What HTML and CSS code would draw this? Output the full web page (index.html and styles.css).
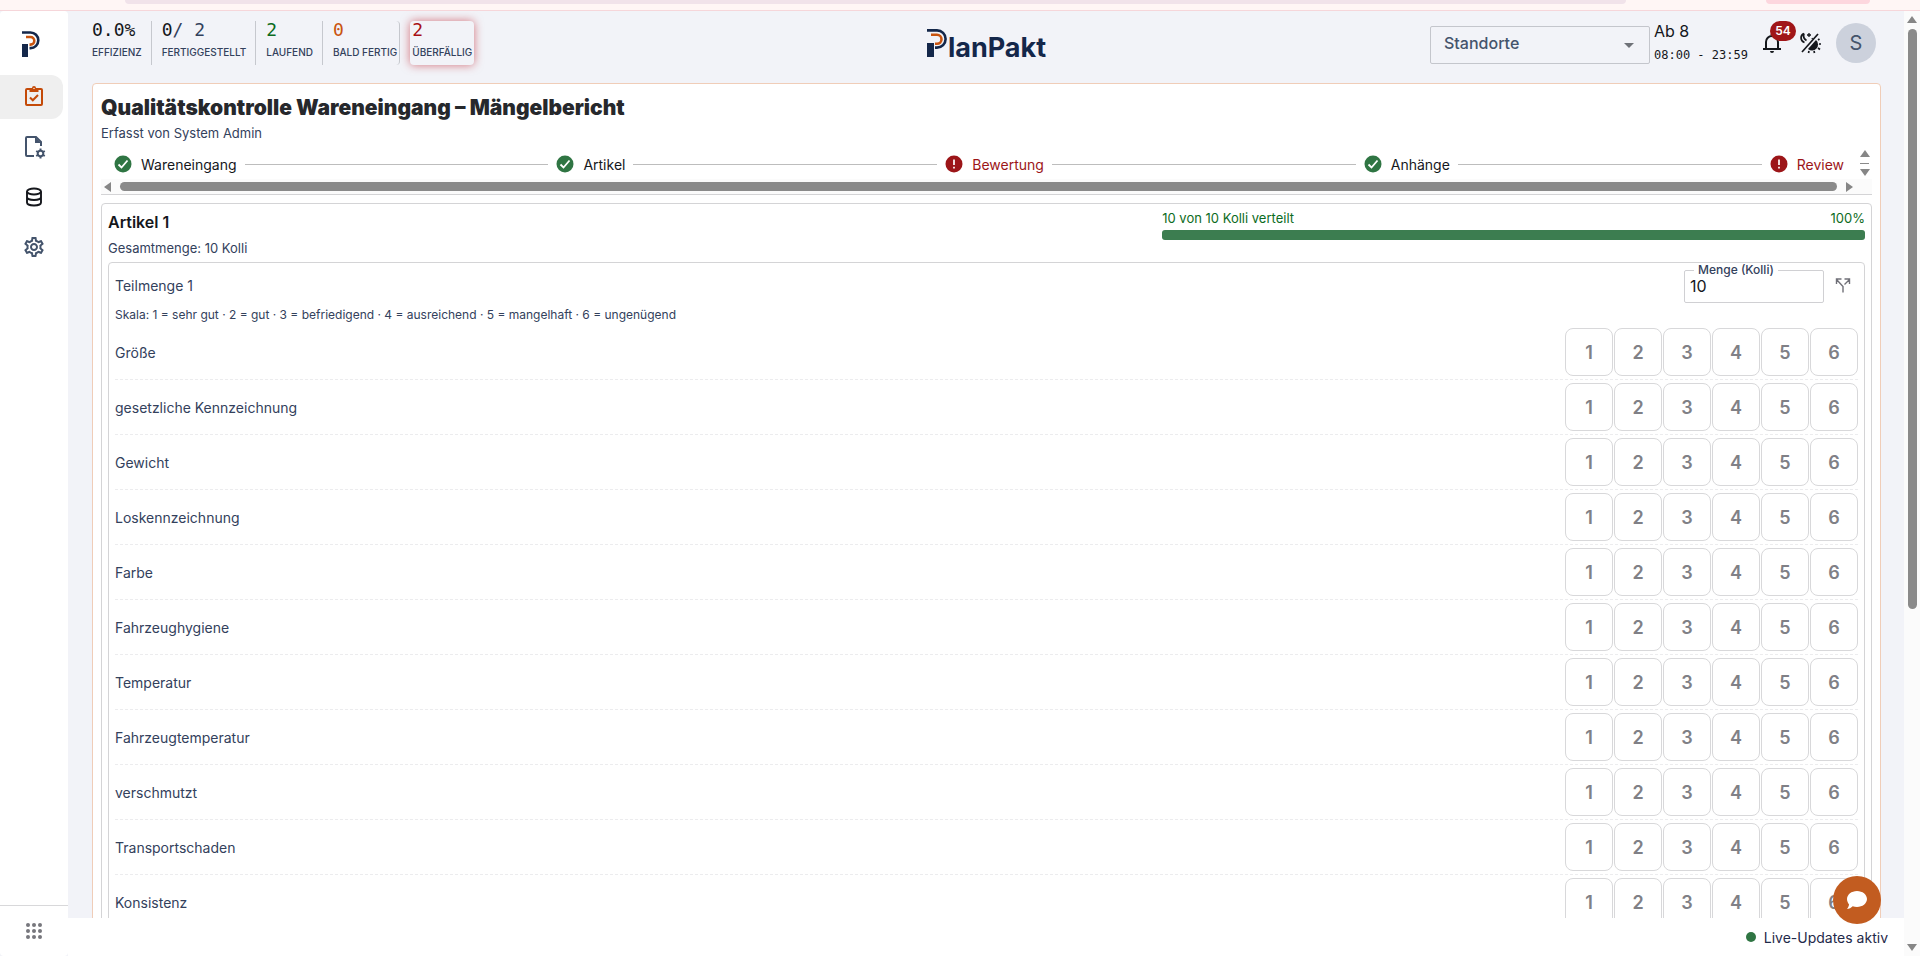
FILE: index.html
```html
<!DOCTYPE html>
<html lang="de">
<head>
  <meta charset="UTF-8" />
  <meta name="viewport" content="width=device-width, initial-scale=1.0"/>
  <title>PlanPakt – Mängelbericht</title>
  <link rel="stylesheet" href="styles.css">
</head>
<body>
  <div class="top-strip">
    <span class="strip-bar"></span>
    <span class="strip-tab"></span>
  </div>

  <div class="app">
    <nav class="sidebar" aria-label="Navigation">
      <a href="#" class="side-logo" aria-label="PlanPakt">
        <svg width="18" height="26" viewBox="0 0 18 26">
          <path d="M0 13h6v13H0z" fill="#14274a"/>
          <path d="M0 1.500h8.500a7.800 7.800 0 0 1 0 15.600H7.500" fill="none" stroke="#14274a" stroke-width="2.600"/>
          <path d="M4 6h4.500a3.800 3.800 0 0 1 0 7.600H7.500" fill="none" stroke="#c9540f" stroke-width="2.600"/>
        </svg>
      </a>
      <a href="#" class="side-item active" aria-label="Aufgaben">
        <svg width="24" height="24" viewBox="0 0 24 24" fill="none" stroke="currentColor" stroke-width="2">
          <rect x="4" y="4" width="16" height="16" rx="1"/>
          <path d="M7.500 3h9v4h-9z" fill="currentColor" stroke="none"/>
          <circle cx="12" cy="3" r="2" fill="currentColor" stroke="none"/>
          <circle cx="12" cy="3.400" r=".7" fill="#fff" stroke="none"/>
          <path d="M8 12.500l2.800 2.800L16 10"/>
        </svg>
      </a>
      <a href="#" class="side-item" aria-label="Vorlagen">
        <svg width="24" height="24" viewBox="0 0 24 24" fill="none" stroke="currentColor" stroke-width="2">
          <path d="M12 21H5a1 1 0 0 1-1-1V3a1 1 0 0 1 1-1h9l5 5v4"/>
          <path d="M13 2v6h6z" fill="currentColor" stroke="none"/>
          <circle cx="18.500" cy="18.500" r="2.800"/>
          <path d="M18.500 13.500v2M18.500 21.500v2M14.200 16l1.700 1M21.100 20l1.700 1M14.200 21l1.700-1M21.100 17l1.700-1"/>
        </svg>
      </a>
      <a href="#" class="side-item dark" aria-label="Stammdaten">
        <svg width="24" height="24" viewBox="0 0 24 24" fill="none" stroke="currentColor" stroke-width="1.900">
          <ellipse cx="12" cy="6.500" rx="7" ry="3"/>
          <path d="M5 6.500v11c0 1.700 3.100 3 7 3s7-1.300 7-3v-11M5 12c0 1.700 3.100 3 7 3s7-1.300 7-3"/>
        </svg>
      </a>
      <a href="#" class="side-item" aria-label="Einstellungen">
        <svg width="24" height="24" viewBox="0 0 24 24" fill="currentColor">
          <path d="M19.430 12.980c.04-.32.070-.64.070-.98s-.03-.66-.07-.98l2.110-1.650c.19-.15.240-.42.120-.64l-2-3.460c-.09-.16-.26-.25-.44-.25-.06 0-.12.010-.17.030l-2.490 1c-.52-.4-1.080-.73-1.690-.98l-.38-2.650C14.460 2.180 14.250 2 14 2h-4c-.25 0-.46.180-.49.420l-.38 2.650c-.61.250-1.170.590-1.690.980l-2.490-1c-.06-.02-.12-.03-.18-.03-.17 0-.34.090-.43.250l-2 3.460c-.13.220-.07.490.120.640l2.110 1.650c-.04.320-.07.650-.07.980s.03.660.070.980l-2.110 1.650c-.19.150-.24.420-.12.640l2 3.460c.09.160.26.250.44.250.06 0 .12-.01.170-.03l2.490-1c.52.400 1.080.730 1.690.980l.38 2.650c.03.240.24.420.49.420h4c.25 0 .46-.18.490-.42l.38-2.650c.61-.25 1.170-.59 1.690-.98l2.490 1c.06.020.12.030.18.030.17 0 .34-.09.430-.25l2-3.460c.12-.22.070-.49-.12-.64l-2.110-1.650zm-1.980-1.710c.04.310.05.520.05.730 0 .21-.02.430-.05.730l-.14 1.130.89.700 1.080.840-.7 1.210-1.270-.51-1.040-.42-.9.680c-.43.320-.84.560-1.250.730l-1.060.430-.16 1.130-.2 1.350h-1.400l-.19-1.350-.16-1.130-1.060-.43c-.43-.18-.83-.41-1.230-.71l-.91-.7-1.060.430-1.270.510-.7-1.210 1.080-.84.890-.7-.14-1.130c-.03-.31-.05-.54-.05-.74s.02-.43.050-.73l.14-1.130-.89-.7-1.080-.84.700-1.210 1.270.510 1.040.420.900-.68c.43-.32.840-.56 1.250-.73l1.060-.43.160-1.130.2-1.350h1.390l.19 1.350.16 1.130 1.060.430c.43.180.83.410 1.230.710l.91.700 1.060-.43 1.270-.51.700 1.210-1.070.850-.89.700.14 1.130zM12 8c-2.210 0-4 1.790-4 4s1.790 4 4 4 4-1.790 4-4-1.790-4-4-4zm0 6c-1.100 0-2-.9-2-2s.9-2 2-2 2 .9 2 2-.9 2-2 2z"/>
        </svg>
      </a>
      <div class="side-bottom">
        <button class="icon-btn" aria-label="Apps">
          <svg width="24" height="24" viewBox="0 0 24 24" fill="#77777d">
            <circle cx="6" cy="6" r="2"/><circle cx="12" cy="6" r="2"/><circle cx="18" cy="6" r="2"/>
            <circle cx="6" cy="12" r="2"/><circle cx="12" cy="12" r="2"/><circle cx="18" cy="12" r="2"/>
            <circle cx="6" cy="18" r="2"/><circle cx="12" cy="18" r="2"/><circle cx="18" cy="18" r="2"/>
          </svg>
        </button>
      </div>
    </nav>

    <div class="main">
      <div class="content">
        <header class="header">
          <div class="stats">
            <div class="stat"><span class="stat-value">0.0%</span><span class="stat-label">Effizienz</span></div>
            <div class="stat"><span class="stat-value">0<span class="muted">/ 2</span></span><span class="stat-label">Fertiggestellt</span></div>
            <div class="stat"><span class="stat-value green">2</span><span class="stat-label">Laufend</span></div>
            <div class="stat soon"><span class="stat-value orange">0</span><span class="stat-label">Bald fertig</span></div>
            <div class="stat overdue"><span class="stat-value red">2</span><span class="stat-label">Überfällig</span></div>
          </div>

          <a href="#" class="brand">
            <svg width="21" height="28" viewBox="0 0 21 28">
              <path d="M0 14h7v14H0z" fill="#14274a"/>
              <path d="M0 1.400h10a8.600 8.600 0 0 1 0 17.200H8" fill="none" stroke="#14274a" stroke-width="2.600"/>
              <path d="M4 5.800h6a4.500 4.500 0 0 1 0 9H8" fill="none" stroke="#c9540f" stroke-width="2.600"/>
            </svg>
            <span class="brand-name">lanPakt</span>
          </a>

          <div class="tools">
            <div class="select-wrap">
              <select class="site-select" aria-label="Standorte"><option>Standorte</option></select>
              <svg class="caret" width="10" height="5" viewBox="0 0 10 5"><path d="M0 0h10L5 5z" fill="#6f7278"/></svg>
            </div>
            <div class="shift">
              <span class="shift-name">Ab 8</span>
              <span class="shift-time">08:00 - 23:59</span>
            </div>
            <button class="icon-btn bell" aria-label="Benachrichtigungen">
              <svg width="24" height="24" viewBox="0 0 24 24" fill="none" stroke="#15171c" stroke-width="2">
                <path d="M6 18v-7a6 6 0 0 1 12 0v7M3 18h18"/>
                <path d="M10 20h4a2 2 0 0 1-4 0zM10.500 4a1.500 1.500 0 0 1 3 0z" fill="#15171c" stroke="none"/>
              </svg>
              <span class="badge">54</span>
            </button>
            <button class="icon-btn theme" aria-label="Farbschema">
              <svg width="24" height="24" viewBox="0 0 24 24" fill="none" stroke="#15171c" stroke-width="1.700">
                <path d="M20 3L4 21"/>
                <path d="M6 2.500c-4 1.500-4 7.500.5 9M6 2.500c-1 3 0 5.500 2.500 7"/>
                <path d="M11 2v4M9 4h4M14 7l.5 1" stroke-width="1.300"/>
                <path d="M10 18L18 9a5.500 5.500 0 0 1-8 9z" fill="#15171c" stroke="none"/>
                <path d="M20 9l1.500-1M21 13h2M20 17l2 1.500M16 20l.5 2M11 20l-.5 2"/>
              </svg>
            </button>
            <button class="avatar">S</button>
          </div>
        </header>

        <main class="report">
          <h1 class="title">Qualitätskontrolle Wareneingang – Mängelbericht</h1>
          <p class="subtitle">Erfasst von System Admin</p>

          <div class="stepper-box">
            <div class="stepper-row">
              <ol class="stepper">
                <li class="step"><svg class="step-icon" viewBox="0 0 18 18"><circle cx="9" cy="9" r="8.500" fill="#2f7543"/><path d="M4.500 9.500l3 3 6-7" fill="none" stroke="#fff" stroke-width="1.800"/></svg>Wareneingang</li>
                <li class="line"></li>
                <li class="step"><svg class="step-icon" viewBox="0 0 18 18"><circle cx="9" cy="9" r="8.500" fill="#2f7543"/><path d="M4.500 9.500l3 3 6-7" fill="none" stroke="#fff" stroke-width="1.800"/></svg>Artikel</li>
                <li class="line"></li>
                <li class="step error"><svg class="step-icon" viewBox="0 0 18 18"><circle cx="9" cy="9" r="8.500" fill="#9c1518"/><path d="M9 4.500v5.500M9 11.800v1.700" stroke="#fff" stroke-width="1.700"/></svg>Bewertung</li>
                <li class="line"></li>
                <li class="step"><svg class="step-icon" viewBox="0 0 18 18"><circle cx="9" cy="9" r="8.500" fill="#2f7543"/><path d="M4.500 9.500l3 3 6-7" fill="none" stroke="#fff" stroke-width="1.800"/></svg>Anhänge</li>
                <li class="line"></li>
                <li class="step error"><svg class="step-icon" viewBox="0 0 18 18"><circle cx="9" cy="9" r="8.500" fill="#9c1518"/><path d="M9 4.500v5.500M9 11.800v1.700" stroke="#fff" stroke-width="1.700"/></svg>Review</li>
              </ol>
              <div class="mini-scroll">
                <span class="arrow up"></span>
                <span class="mini-thumb"></span>
                <span class="arrow down"></span>
              </div>
            </div>
            <div class="hscroll">
              <span class="arrow left"></span>
              <span class="hthumb"></span>
              <span class="arrow right"></span>
            </div>
          </div>

          <section class="article">
            <div class="article-head">
              <div>
                <h2 class="article-title">Artikel 1</h2>
                <p class="article-total">Gesamtmenge: 10 Kolli</p>
              </div>
              <div class="progress">
                <div class="progress-text"><span>10 von 10 Kolli verteilt</span><span>100%</span></div>
                <div class="progress-bar"></div>
              </div>
            </div>

            <div class="part">
              <div class="part-head">
                <h3 class="part-title">Teilmenge 1</h3>
                <fieldset class="amount">
                  <legend><label for="amount">Menge (Kolli)</label></legend>
                  <input type="text" id="amount" value="10" />
                </fieldset>
                <button class="icon-btn split" aria-label="Teilmenge aufteilen">
                  <svg width="16" height="16" viewBox="0 0 16 16" fill="none" stroke="#707078" stroke-width="1.400">
                    <path d="M8 15.500V9.500L2 3M9.500 7.500L14 3M1.500 7V2h5M9.500 2h5v5"/>
                  </svg>
                </button>
              </div>
              <p class="scale">Skala: 1 = sehr gut · 2 = gut · 3 = befriedigend · 4 = ausreichend · 5 = mangelhaft · 6 = ungenügend</p>
              <div id="criteria"></div>
            </div>
          </section>
        </main>
      </div>

      <footer class="footer">
        <span class="dot"></span>
        <span>Live-Updates aktiv</span>
      </footer>
      <button class="chat" aria-label="Chat">
        <svg width="22" height="20" viewBox="0 0 22 20" fill="#fff">
          <path d="M11 1c5.500 0 10 3.600 10 8s-4.500 8-10 8c-1.500 0-3-.3-4.300-.8C5.200 17.500 3 19 1 19c1-1.200 2-3 2-4.700C1.800 12.900 1 11 1 9c0-4.400 4.500-8 10-8z"/>
        </svg>
      </button>
    </div>

    <div class="page-scroll">
      <span class="arrow up"></span>
      <span class="page-thumb"></span>
      <span class="arrow down"></span>
    </div>
  </div>

  <script>
    const criteria = [
      "Größe", "gesetzliche Kennzeichnung", "Gewicht", "Loskennzeichnung", "Farbe",
      "Fahrzeughygiene", "Temperatur", "Fahrzeugtemperatur", "verschmutzt",
      "Transportschaden", "Konsistenz"
    ];
    const list = document.getElementById("criteria");

    criteria.forEach((name) => {
      const row = document.createElement("div");
      row.className = "criterion";
      const label = document.createElement("span");
      label.textContent = name;
      const grades = document.createElement("div");
      grades.className = "grades";
      for (let i = 1; i <= 6; i++) {
        const btn = document.createElement("button");
        btn.className = "grade";
        btn.textContent = i;
        grades.appendChild(btn);
      }
      row.append(label, grades);
      list.appendChild(row);
    });
  </script>
</body>
</html>
```
FILE: styles.css
```css
* {
  box-sizing: border-box;
}
body {
  margin: 0;
  height: 100vh;
  display: flex;
  flex-direction: column;
  overflow: hidden;
  font-family: Inter, "Liberation Sans", sans-serif;
  font-size: 14px;
  color: #15171c;
  background: #fff;
}
h1, h2, h3, p, ol {
  margin: 0;
  padding: 0;
}
a {
  color: inherit;
  text-decoration: none;
}
button, input, select {
  font-family: inherit;
  color: inherit;
}
.top-strip {
  display: flex;
  justify-content: space-between;
  flex: none;
  height: 11px;
  padding: 0 50px 0 125px;
  background: #fff6f5;
  border-bottom: 1px solid #f6d6da;
}
.strip-bar {
  width: 86%;
  height: 4px;
  background: #f1e3ea;
  border-radius: 0 0 10px 10px;
}
.strip-tab {
  width: 104px;
  height: 4px;
  background: #fdd7de;
  border-radius: 0 0 10px 10px;
}
.app {
  display: flex;
  flex: 1;
  min-height: 0;
  background: #f2f3f8;
}

/* Sidebar */
.sidebar {
  display: flex;
  flex-direction: column;
  width: 68px;
  background: #fff;
  border-radius: 4px;
}
.side-logo {
  display: flex;
  padding: 20px 0 18px 22px;
}
.side-item {
  display: flex;
  align-items: center;
  justify-content: center;
  height: 44px;
  margin-bottom: 6px;
  color: #44546c;
}
.side-item.active {
  width: 63px;
  padding-left: 5px;
  color: #c44a08;
  background: #efefef;
  border-radius: 0 12px 12px 0;
}
.side-item.dark {
  color: #15171c;
}
.side-bottom {
  display: flex;
  justify-content: center;
  height: 51px;
  margin-top: auto;
  border-top: 1px solid #d8d8da;
}
.icon-btn {
  display: flex;
  align-items: center;
  justify-content: center;
  padding: 0;
  background: none;
  border: none;
  cursor: pointer;
}

/* Header */
.main {
  position: relative;
  display: flex;
  flex-direction: column;
  flex: 1;
  min-width: 0;
}
.content {
  flex: 1;
  min-height: 0;
  padding: 0 23px 0 24px;
  overflow: hidden;
}
.header {
  display: grid;
  grid-template-columns: 1fr auto 1fr;
  height: 72px;
}
.stats {
  display: flex;
  align-items: flex-start;
  padding-top: 10px;
}
.stat {
  display: flex;
  flex-direction: column;
  gap: 8px;
  height: 44px;
  padding-right: 9px;
  margin-right: 10px;
  border-right: 1px solid #c6c8ce;
}
.stat-value {
  font-family: "DejaVu Sans Mono", monospace;
  font-size: 18px;
  line-height: 18px;
}
.stat-label {
  font-size: 10px;
  line-height: 10px;
  font-weight: 500;
  color: #33415c;
  text-transform: uppercase;
}
.stat.soon {
  padding-right: 2px;
  border-radius: 4px;
}
.stat.overdue {
  padding: 0 2px;
  border: none;
  border-radius: 4px;
  box-shadow: 0 0 10px rgba(190, 30, 40, 0.6);
}
.muted { color: #33415c; }
.green { color: #0c6b22; }
.orange { color: #c9540f; }
.red { color: #a80f14; }
.brand {
  display: flex;
  align-items: flex-start;
  padding-top: 18px;
  color: #14274a;
}
.brand-name {
  font-size: 27px;
  line-height: 38px;
  font-weight: 700;
}
.tools {
  display: flex;
  justify-content: flex-end;
  padding-right: 5px;
}
.select-wrap {
  position: relative;
  width: 220px;
  margin: 15px 4px 0 0;
}
.site-select {
  width: 100%;
  height: 38px;
  padding: 0 13px 4px;
  appearance: none;
  font-size: 16px;
  font-weight: 500;
  color: #44546c;
  background: transparent;
  border: 1px solid #c4c6cc;
  border-radius: 2px;
}
.caret {
  position: absolute;
  right: 16px;
  top: 17px;
}
.shift {
  display: flex;
  flex-direction: column;
  width: 106px;
  padding-top: 9px;
}
.shift-name {
  font-size: 16px;
  line-height: 22px;
}
.shift-time {
  font-family: "DejaVu Sans Mono", monospace;
  font-size: 12px;
  line-height: 26px;
}
.bell {
  position: relative;
  height: 24px;
  margin-top: 20px;
}
.badge {
  position: absolute;
  left: 10px;
  top: -10px;
  min-width: 26px;
  font-size: 12px;
  line-height: 20px;
  font-weight: 600;
  color: #fff;
  background: #a01518;
  border-radius: 10px;
}
.theme {
  height: 24px;
  margin: 20px 14px 0 14px;
}
.avatar {
  width: 40px;
  height: 40px;
  margin-top: 12px;
  padding: 0;
  font-size: 20px;
  color: #44546c;
  background: #ccd1dc;
  border: none;
  border-radius: 50%;
}

/* Report card */
.report {
  padding: 11px 8px;
  background: #fff;
  border: 1px solid #f0cdb8;
  border-radius: 4px;
}
.title {
  font-size: 21px;
  line-height: 26px;
  font-weight: 900;
  color: #26282c;
}
.subtitle {
  margin-top: 3px;
  font-size: 13px;
  line-height: 18px;
  color: #33415c;
}
.stepper-box {
  margin-top: 7px;
  border-bottom: 1px solid #d4d4d6;
}
.stepper-row {
  display: flex;
}
.stepper {
  display: flex;
  align-items: center;
  gap: 8px;
  flex: 1;
  height: 30px;
  padding: 0 13px;
  list-style: none;
}
.step {
  display: flex;
  align-items: center;
  gap: 9px;
}
.step.error {
  color: #9c1518;
}
.step-icon {
  width: 18px;
  height: 18px;
}
.line {
  flex: 1;
  height: 1px;
  background: #bdbdbd;
}
.mini-scroll {
  display: flex;
  flex-direction: column;
  align-items: center;
  justify-content: space-between;
  width: 15px;
  padding: 1px 0 3px;
}
.mini-thumb {
  width: 9px;
  height: 1px;
  background: #8a8a8a;
}
.arrow {
  border: 5px solid transparent;
}
.arrow.up { border-top: 0; border-bottom: 7px solid #868686; }
.arrow.down { border-bottom: 0; border-top: 7px solid #868686; }
.arrow.left { border-left: 0; border-right: 7px solid #868686; }
.arrow.right { border-right: 0; border-left: 7px solid #868686; }
.hscroll {
  display: flex;
  align-items: center;
  gap: 9px;
  height: 15px;
  padding: 0 19px 0 3px;
  background: #fbfbfb;
}
.hthumb {
  flex: 1;
  height: 9px;
  background: #8a8a8a;
  border-radius: 5px;
}

/* Article */
.article {
  margin-top: 8px;
  padding: 6px;
  border: 1px solid #d4d4d6;
  border-radius: 4px;
}
.article-head {
  display: flex;
  justify-content: space-between;
}
.article-title {
  font-size: 16px;
  line-height: 24px;
  font-weight: 600;
}
.article-total {
  margin-top: 4px;
  font-size: 13px;
  line-height: 20px;
  color: #33415c;
}
.progress {
  width: 40%;
}
.progress-text {
  display: flex;
  justify-content: space-between;
  font-size: 13px;
  line-height: 16px;
  color: #0c6b22;
}
.progress-bar {
  height: 10px;
  margin-top: 4px;
  background: #3c7d50;
  border-radius: 3px;
}
.part {
  margin-top: 4px;
  padding: 0 6px;
  border: 1px solid #d4d4d6;
  border-radius: 4px;
}
.part-head {
  display: flex;
  align-items: center;
  height: 44px;
}
.part-title {
  flex: 1;
  font-size: 14px;
  font-weight: 400;
  color: #33415c;
}
.amount {
  width: 140px;
  height: 40px;
  margin: 0 11px 4px 0;
  padding: 0 5px;
  border: 1px solid #d0d0d3;
  border-radius: 2px;
}
.amount legend {
  margin-left: 4px;
  padding: 0 4px;
  font-size: 12px;
  line-height: 14px;
  font-weight: 500;
  color: #33415c;
}
.amount input {
  display: block;
  width: 100%;
  padding: 0;
  font-size: 16px;
  line-height: 18px;
  background: none;
  border: none;
}
.split {
  margin-right: 7px;
}
.scale {
  padding-bottom: 2px;
  font-size: 12px;
  line-height: 16px;
  color: #33415c;
}
.criterion {
  display: flex;
  align-items: center;
  justify-content: space-between;
  padding: 3px 0;
  color: #33415c;
  border-bottom: 1px dashed #ececee;
}
.grades {
  display: flex;
  gap: 1px;
}
.grade {
  width: 48px;
  height: 48px;
  padding: 0;
  font-size: 18px;
  font-weight: 600;
  color: #808086;
  background: #fff;
  border: 1px solid #d8d8da;
  border-radius: 8px;
  cursor: pointer;
}

/* Footer */
.footer {
  display: flex;
  align-items: center;
  justify-content: flex-end;
  gap: 8px;
  flex: none;
  height: 38px;
  padding-right: 16px;
  color: #1f2a4a;
  background: #fff;
}
.dot {
  width: 10px;
  height: 10px;
  background: #2f7543;
  border-radius: 50%;
}
.chat {
  position: absolute;
  right: 23px;
  bottom: 32px;
  display: flex;
  align-items: center;
  justify-content: center;
  width: 48px;
  height: 48px;
  padding: 0;
  background: #c25c20;
  border: none;
  border-radius: 50%;
}
.page-scroll {
  display: flex;
  flex-direction: column;
  align-items: center;
  width: 16px;
  padding: 5px 0;
  background: #fbfbfb;
}
.page-thumb {
  width: 9px;
  height: 62%;
  margin: 6px 0 auto;
  background: #8a8a8a;
  border-radius: 5px;
}
```
